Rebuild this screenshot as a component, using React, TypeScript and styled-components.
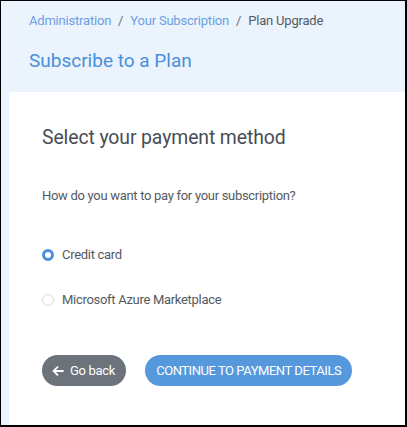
import React from "react";
import styled, { createGlobalStyle } from "styled-components";

const Global = createGlobalStyle`
  html, body { margin: 0; padding: 0; }
  body { font-family: Roboto, "Liberation Sans", sans-serif; background: #fff; }
  * { box-sizing: border-box; }
`;

const Frame = styled.div`
  width: 407px;
  height: 427px;
  border-top: 1px solid #000;
  border-left: 1px solid #000;
  border-right: 2px solid #000;
  border-bottom: 2px solid #000;
  background: #ebf3fc;
  display: flex;
  flex-direction: column;
  overflow: hidden;
`;

const Header = styled.div`
  padding: 11px 0 0 28px;
  height: 91px;
`;

const Crumbs = styled.nav`
  display: flex;
  align-items: center;
  font-size: 13px;
  letter-spacing: -0.2px;
  line-height: 17px;
  color: #555b62;
`;

const Crumb = styled.span<{ $link?: boolean }>`
  color: ${(p) => (p.$link ? "#6e9fe3" : "#555b62")};
`;

const Sep = styled.span`
  color: #6b7177;
  margin: 0 7px;
`;

const Title = styled.h1`
  margin: 21px 0 0;
  font-size: 19px;
  font-weight: 400;
  line-height: 22px;
  color: #4a8fdb;
  letter-spacing: 0;
`;

const Card = styled.div`
  flex: 1;
  margin-left: 8px;
  background: #fff;
  border-top-left-radius: 4px;
  padding: 34px 0 0 33px;
  display: flex;
  flex-direction: column;
`;

const Heading = styled.h2`
  margin: 0;
  font-size: 19.4px;
  font-weight: 400;
  line-height: 24px;
  color: #474d54;
  letter-spacing: -0.1px;
`;

const Question = styled.p`
  margin: 37px 0 0;
  font-size: 13px;
  line-height: 17px;
  color: #545a61;
  letter-spacing: -0.3px;
`;

const Options = styled.div`
  display: flex;
  flex-direction: column;
  gap: 28px;
  margin-top: 42px;
`;

const Option = styled.label`
  display: flex;
  align-items: center;
  gap: 8px;
  font-size: 13px;
  line-height: 17px;
  color: #545a61;
  letter-spacing: -0.3px;
`;

const Radio = styled.span<{ $checked?: boolean }>`
  width: 12px;
  height: 12px;
  border-radius: 50%;
  background: #fff;
  border: ${(p) => (p.$checked ? "3.5px solid #4a8fdb" : "1px solid #d4d7da")};
  flex: none;
`;

const Buttons = styled.div`
  display: flex;
  gap: 19px;
  margin-top: 47px;
`;

const Button = styled.button<{ $variant: "secondary" | "primary" }>`
  display: flex;
  align-items: center;
  gap: 6px;
  height: 31px;
  padding-left: ${(p) => (p.$variant === "primary" ? "11px" : "10px")};
  padding-right: 11px;
  border: none;
  border-radius: 16px;
  font-family: inherit;
  font-size: 13px;
  letter-spacing: ${(p) => (p.$variant === "primary" ? "-0.45px" : "-0.3px")};
  color: #fff;
  background: ${(p) => (p.$variant === "primary" ? "#5599dc" : "#6c737b")};
  text-transform: ${(p) => (p.$variant === "primary" ? "uppercase" : "none")};
`;

const Arrow = () => (
  <svg width="12" height="10" viewBox="0 0 12 10" fill="none">
    <path d="M11 5H2M5.5 1.2L1.6 5l3.9 3.8" stroke="#fff" strokeWidth="1.8" strokeLinecap="round" strokeLinejoin="round" />
  </svg>
);

export default function App() {
  return (
    <>
      <Global />
      <Frame>
        <Header>
          <Crumbs>
            <Crumb $link>Administration</Crumb>
            <Sep>/</Sep>
            <Crumb $link>Your Subscription</Crumb>
            <Sep>/</Sep>
            <Crumb>Plan Upgrade</Crumb>
          </Crumbs>
          <Title>Subscribe to a Plan</Title>
        </Header>
        <Card>
          <Heading>Select your payment method</Heading>
          <Question>How do you want to pay for your subscription?</Question>
          <Options>
            <Option>
              <Radio $checked />
              Credit card
            </Option>
            <Option>
              <Radio />
              Microsoft Azure Marketplace
            </Option>
          </Options>
          <Buttons>
            <Button $variant="secondary">
              <Arrow />
              Go back
            </Button>
            <Button $variant="primary">Continue to payment details</Button>
          </Buttons>
        </Card>
      </Frame>
    </>
  );
}
